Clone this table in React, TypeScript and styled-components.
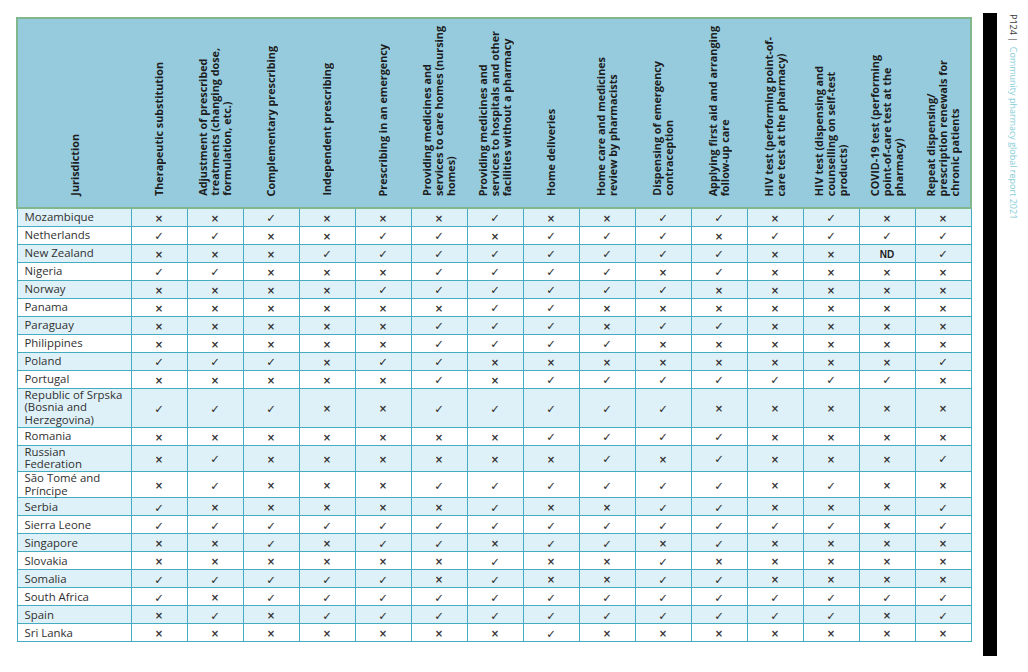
import React from 'react';
import styled, { createGlobalStyle } from 'styled-components';

const GlobalStyle = createGlobalStyle`
    html, body {
        margin: 0;
        padding: 0;
        background: #ffffff;
    }
    body {
        font-family: "Open Sans", "Noto Sans", sans-serif;
        color: #2b2b2b;
    }
`

const Page = styled.div`
    display: flex;
    align-items: flex-start;
    padding: 13px 0 0 16px;
    width: 1028px;
    height: 672px;
    box-sizing: border-box;
`

const Table = styled.table`
    width: 954px;
    margin-top: 4px;
    table-layout: fixed;
    border-collapse: collapse;
    flex: none;
`

const HeadCell = styled.th<{ $first?: boolean; $last?: boolean }>`
    height: 182px;
    padding: 0 0 6px;
    background: #95cbdd;
    border-top: 2px solid #80b78d;
    border-bottom: 2px solid #80b78d;
    border-left: ${p => (p.$first ? '2px solid #80b78d' : 'none')};
    border-right: ${p => (p.$last ? '2px solid #80b78d' : 'none')};
    vertical-align: bottom;
    text-align: center;
`

const HeadLabel = styled.div`
    display: inline-block;
    writing-mode: vertical-rl;
    transform: rotate(180deg);
    text-align: left;
    font-size: 10.8px;
    line-height: 12px;
    font-weight: 700;
    color: #1d1d1d;
    white-space: nowrap;
`

const Row = styled.tr<{ $shade: boolean }>`
    height: 18px;
    background: ${p => (p.$shade ? '#dff1f8' : '#ffffff')};
`

const NameCell = styled.td`
    border: 1px solid #46acc1;
    padding: 0 0 0 7px;
    font-size: 11.4px;
    line-height: 12.7px;
    color: #303030;
    vertical-align: middle;
`

const MarkCell = styled.td`
    border: 1px solid #46acc1;
    padding: 0;
    line-height: 12px;
    text-align: center;
    vertical-align: middle;
    color: #333333;
`

const Tick = styled.span`
    font-family: "DejaVu Sans", sans-serif;
    font-size: 11.5px;
    line-height: 12px;
`

const Cross = styled.span`
    font-family: "DejaVu Sans", sans-serif;
    font-size: 10px;
    line-height: 12px;
    font-weight: 700;
`

const NoData = styled.span`
    font-family: "Liberation Sans", Arial, sans-serif;
    font-size: 10px;
    line-height: 12px;
    font-weight: 700;
    color: #222;
`

const Bar = styled.div`
    flex: none;
    width: 14px;
    height: 643px;
    margin-left: 11px;
    background: #000000;
`

const Caption = styled.div`
    flex: none;
    margin-left: 10px;
    margin-top: 1px;
    writing-mode: vertical-rl;
    font-size: 9px;
    line-height: 12px;
    color: #3a3a3a;
    white-space: nowrap;
`

const CaptionTitle = styled.span`
    color: #86cdd6;
`

const headers: string[][] = [
    ['Jurisdiction'],
    ['Therapeutic substitution'],
    ['Adjustment of prescribed', 'treatments (changing dose,', 'formulation, etc.)'],
    ['Complementary prescribing'],
    ['Independent prescribing'],
    ['Prescribing in an emergency'],
    ['Providing medicines and', 'services to care homes (nursing', 'homes)'],
    ['Providing medicines and', 'services to hospitals and other', 'facilities without a pharmacy'],
    ['Home deliveries'],
    ['Home care and medicines', 'review by pharmacists'],
    ['Dispensing of emergency', 'contraception'],
    ['Applying first aid and arranging', 'follow-up care'],
    ['HIV test (performing point-of-', 'care test at the pharmacy)'],
    ['HIV test (dispensing and', 'counselling on self-test', 'products)'],
    ['COVID-19 test (performing', 'point-of-care test at the', 'pharmacy)'],
    ['Repeat dispensing/', 'prescription renewals for', 'chronic patients'],
]

// y = offered, n = not offered, D = no data
const rows: { name: string[]; marks: string }[] = [
    { name: ['Mozambique'], marks: 'nnynnnynnyynynn' },
    { name: ['Netherlands'], marks: 'yynnyynyyynyyyy' },
    { name: ['New Zealand'], marks: 'nnnyyyyyyyynnDy' },
    { name: ['Nigeria'], marks: 'yynnnyyyynynnnn' },
    { name: ['Norway'], marks: 'nnnnyyyyyynnnnn' },
    { name: ['Panama'], marks: 'nnnnnnyynnnnnnn' },
    { name: ['Paraguay'], marks: 'nnnnnyyynyynnnn' },
    { name: ['Philippines'], marks: 'nnnnnyyyynnnnnn' },
    { name: ['Poland'], marks: 'yyynyynnnnnnnny' },
    { name: ['Portugal'], marks: 'nnnnnynyyyyyyyn' },
    { name: ['Republic of Srpska', '(Bosnia and', 'Herzegovina)'], marks: 'yyynnyyyyynnnnn' },
    { name: ['Romania'], marks: 'nnnnnnnyyyynnnn' },
    { name: ['Russian', 'Federation'], marks: 'nynnnnnnynynnny' },
    { name: ['São Tomé and', 'Príncipe'], marks: 'nynnnyyyyyynynn' },
    { name: ['Serbia'], marks: 'ynnnnnynnyynnny' },
    { name: ['Sierra Leone'], marks: 'yyyyyyyyyyyyyny' },
    { name: ['Singapore'], marks: 'nnynyynyynynnnn' },
    { name: ['Slovakia'], marks: 'nnnnnnynnynnnnn' },
    { name: ['Somalia'], marks: 'yyyyynynnyynnnn' },
    { name: ['South Africa'], marks: 'ynyyyyyyyyyyyyy' },
    { name: ['Spain'], marks: 'nynyyyyyyyyyyny' },
    { name: ['Sri Lanka'], marks: 'nnnnnnnynnnnnnn' },
]

const Mark = ({ value }: { value: string }) => {
    if (value === 'y') return <Tick>✓</Tick>;
    if (value === 'D') return <NoData>ND</NoData>;
    return <Cross>×</Cross>;
}

const Lines = ({ lines }: { lines: string[] }) => (
    <>
        {lines.map((line, i) => (
            <React.Fragment key={i}>
                {i > 0 && <br />}
                {line}
            </React.Fragment>
        ))}
    </>
)

export default function App() {
    return (
        <>
            <GlobalStyle />
            <Page>
                <Table>
                    <colgroup>
                        <col style={{ width: 114 }} />
                        {headers.slice(1).map((_, i) => <col key={i} style={{ width: 56 }} />)}
                    </colgroup>
                    <thead>
                        <tr>
                            {headers.map((lines, i) => (
                                <HeadCell key={i} $first={i === 0} $last={i === headers.length - 1}>
                                    <HeadLabel><Lines lines={lines} /></HeadLabel>
                                </HeadCell>
                            ))}
                        </tr>
                    </thead>
                    <tbody>
                        {rows.map((row, r) => (
                            <Row key={row.name.join(' ')} $shade={r % 2 === 0}>
                                <NameCell><Lines lines={row.name} /></NameCell>
                                {row.marks.split('').map((m, c) => (
                                    <MarkCell key={c}><Mark value={m} /></MarkCell>
                                ))}
                            </Row>
                        ))}
                    </tbody>
                </Table>
                <Bar />
                <Caption>
                    P124 |<CaptionTitle>&nbsp; Community pharmacy global report 2021</CaptionTitle>
                </Caption>
            </Page>
        </>
    );
}
